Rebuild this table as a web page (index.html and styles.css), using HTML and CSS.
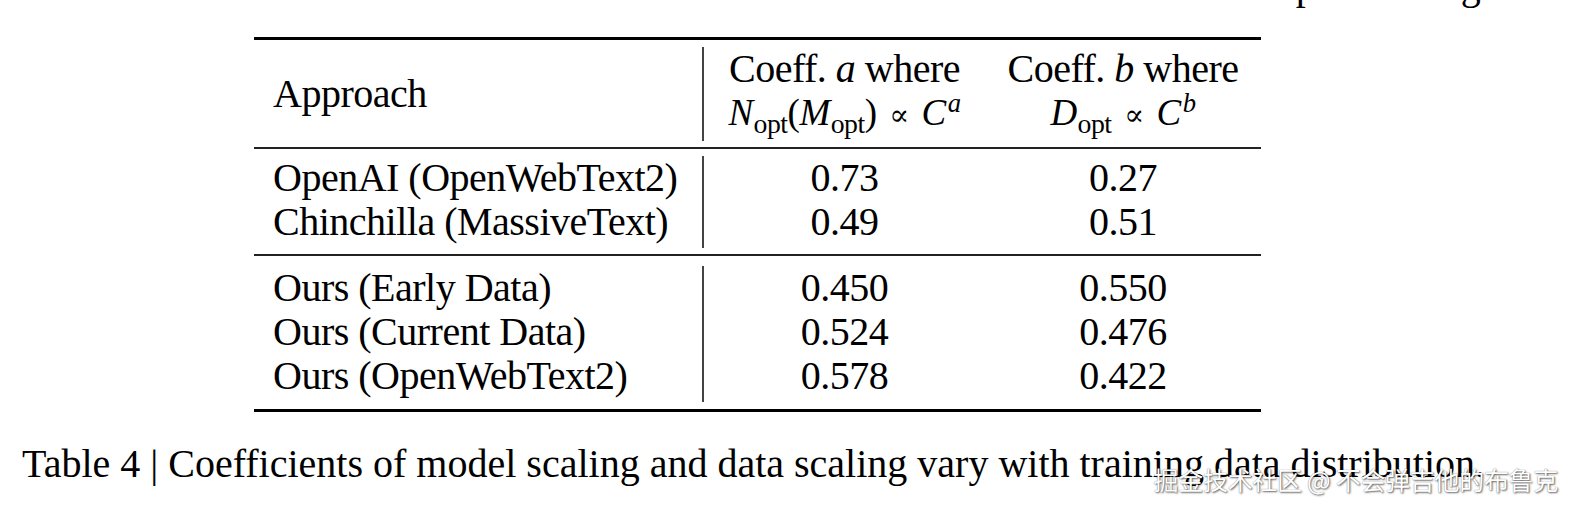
FILE: index.html
```html
<!DOCTYPE html>
<html lang="en">
<head>
  <meta charset="UTF-8" />
  <meta name="viewport" content="width=device-width, initial-scale=1.0"/>
  <title>Table 4 - Scaling coefficients</title>
  <link rel="stylesheet" href="styles.css">
</head>
<body>

<div class="page">
  <!-- tail of the paragraph above, cut off by the crop -->
  <div class="prev-line"><span>compute budget</span></div>

  <div class="booktab">
    <div class="sec head">
      <div class="c1 approach">Approach</div>
      <div class="c2">
        <div>Coeff. <i>a</i> where</div>
        <div class="math"><i>N</i><sub class="opt">opt</sub>(<i>M</i><sub class="opt">opt</sub>) <span class="prop">∝</span> <i>C</i><sup><i>a</i></sup></div>
      </div>
      <div class="c3">
        <div>Coeff. <i>b</i> where</div>
        <div class="math"><i>D</i><sub class="opt">opt</sub> <span class="prop">∝</span> <i>C</i><sup><i>b</i></sup></div>
      </div>
    </div>

    <div class="sec">
      <div class="c1">
        <div>OpenAI (OpenWebText2)</div>
        <div>Chinchilla (MassiveText)</div>
      </div>
      <div class="c2">
        <div>0.73</div>
        <div>0.49</div>
      </div>
      <div class="c3">
        <div>0.27</div>
        <div>0.51</div>
      </div>
    </div>

    <div class="sec last">
      <div class="c1">
        <div>Ours (Early Data)</div>
        <div>Ours (Current Data)</div>
        <div>Ours (OpenWebText2)</div>
      </div>
      <div class="c2">
        <div>0.450</div>
        <div>0.524</div>
        <div>0.578</div>
      </div>
      <div class="c3">
        <div>0.550</div>
        <div>0.476</div>
        <div>0.422</div>
      </div>
    </div>
  </div>

  <p class="caption">Table 4 | Coefficients of model scaling and data scaling vary with training data distribution.</p>
</div>

<div class="watermark">掘金技术社区 @ 不会弹吉他的布鲁克</div>

</body>
</html>
```

FILE: styles.css
```css
body {
  margin: 0;
  background: #fff;
  color: #000;
  font-family: 'Liberation Serif', 'DejaVu Serif', serif;
  font-size: 40px;
  letter-spacing: -0.5px;
}

.page {
  padding: 0 22px;
}

.prev-line {
  height: 10px;
  overflow: hidden;
  text-align: right;
  padding-right: 64px;
}

.prev-line span {
  display: block;
  margin-top: -34px;
  line-height: 40px;
  word-spacing: 30px;
}

.booktab {
  width: 1007px;
  margin: 27px 0 0 232px;
  border-top: 3px solid #000;
  border-bottom: 3px solid #000;
}

.sec {
  display: grid;
  grid-template-columns: 448px 283px 276px;
  padding: 7px 0 6px;
  line-height: 44px;
}

.sec.head {
  padding-top: 7px;
}

.sec.last {
  padding: 10px 0 7px;
}

.sec + .sec {
  border-top: 2px solid #222;
}

.c1 {
  padding: 0 0 4px 19px;
}

.c2 {
  border-left: 2px solid #444;
  text-align: center;
  padding-bottom: 4px;
}

.c3 {
  text-align: center;
  padding-bottom: 4px;
}

.approach {
  align-self: center;
  padding-bottom: 0;
}

.math {
  font-size: 37px;
  word-spacing: 4px;
}

.opt {
  font-size: 0.75em;
  vertical-align: -0.28em;
  line-height: 0;
  margin-left: 1px;
}

sup {
  font-size: 0.72em;
  vertical-align: 0.5em;
  line-height: 0;
  margin-left: 2px;
}

.prop {
  font-family: 'DejaVu Serif', serif;
  font-size: 0.8em;
}

.caption {
  margin: 30px 0 0;
  line-height: 44px;
  letter-spacing: 0;
}

.watermark {
  position: absolute;
  right: 36px;
  top: 461px;
  font-family: 'Noto Sans CJK SC', sans-serif;
  font-size: 25px;
  letter-spacing: -0.3px;
  color: #fff;
  text-shadow: 1px 1px 2px rgba(0,0,0,0.6), 0 0 1px rgba(0,0,0,0.5);
}
```
